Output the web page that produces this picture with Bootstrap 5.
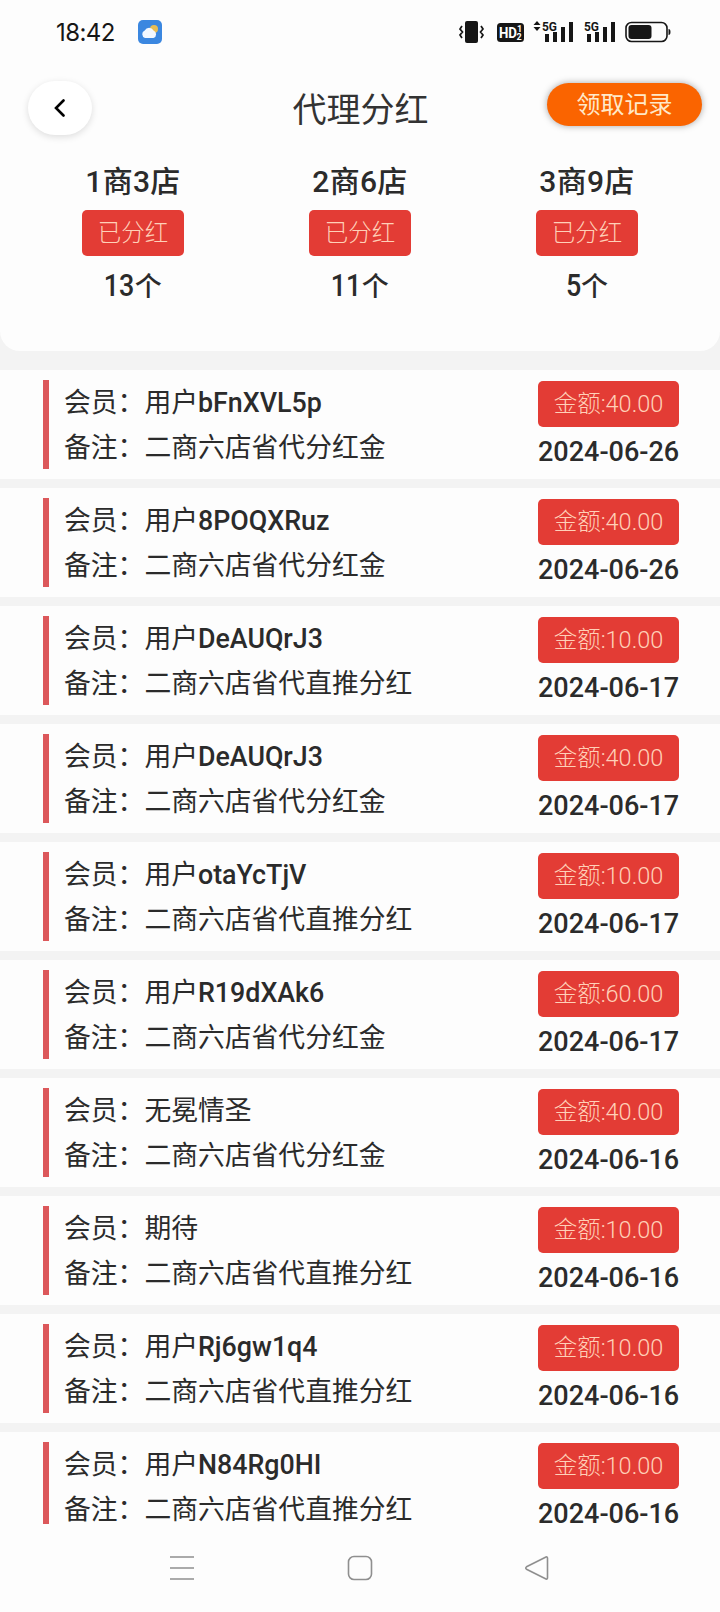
<!DOCTYPE html>
<html lang="zh-CN">
<head>
<meta charset="utf-8">
<meta name="viewport" content="width=device-width, initial-scale=1">
<title>代理分红</title>
<link href="https://cdn.jsdelivr.net/npm/bootstrap@5.3.0/dist/css/bootstrap.min.css" rel="stylesheet">
<style>
  body { width: 720px; height: 1612px; overflow: hidden; background: #fdfdfd; color: #2b2b2b;
    font-family: Roboto, "Noto Sans CJK SC", sans-serif; }
  svg { display: block; flex: none; }
  .status-bar { height: 64px; padding: 0 49px 0 56px; color: #161616; }
  .clock { font-family: Inter, "Noto Sans CJK SC", sans-serif; font-size: 24px; letter-spacing: -.6px; padding-top: 2px; }
  .weather { margin-left: 23px; }
  .title-bar { height: 90px; padding: 0 18px 0 28px; }
  .side { width: 155px; }
  .back-btn { width: 64px; height: 54px; border-radius: 27px; background: #fff; border: 0; margin-top: -2px;
    box-shadow: 0 2px 7px rgba(0,0,0,.13); }
  .page-title { font-size: 34px; font-weight: 400; line-height: 1; color: #333; padding: 2px 9px 0 0; }
  .record-btn { width: 155px; height: 43px; border-radius: 22px; background: #fa6400; color: #ffe9c9;
    font-size: 24px; line-height: 45px; padding: 0; border: 0; margin-top: -10px; box-shadow: 0 0 7px rgba(0,0,0,.35); }
  .panel { background: #f3f3f3; height: 216px; }
  .summary { height: 197px; background: #fdfdfd; border-radius: 0 0 20px 20px; padding: 2px 19.5px 0; }
  .shop { font-size: 30px; font-weight: 500; line-height: 51px; height: 54px; letter-spacing: .3px; }
  .paid, .amount { background: #e33c35; color: #ffd0b8; border-radius: 5px; font-weight: 300; height: 46px; line-height: 46px; }
  .paid { width: 102px; font-size: 23.5px; }
  .count { font-size: 27px; font-weight: 500; line-height: 58px; }
  .count b { font-size: 32px; font-weight: 500; display: inline-block; transform: scaleX(.84); transform-origin: right; }
  .count-2 { margin-left: -6px; }
  .count-1 { margin-left: -3px; }
  .records { background: #f3f3f3; gap: 9px; }
  .record { height: 109px; background: #fdfdfd; padding: 10px 41px 0 43px; }
  .record:last-child .info { height: 82px; }
  .info { height: 89px; border-left: 6px solid #dc585b; padding: 1px 0 0 15px; font-size: 26.8px; line-height: 44.5px; white-space: nowrap; }
  .latin { font-weight: 500; }
  .aside { width: 141px; padding-top: 1px; }
  .amount { font-size: 23.5px; }
  .date { font-size: 27px; font-weight: 500; line-height: 51px; white-space: nowrap; }
  .sys-nav { height: 71px; padding: 0 170px 17px 169px; color: #8f8f8f; }
</style>
</head>
<body class="d-flex flex-column">
<header class="status-bar d-flex align-items-center flex-shrink-0">
  <span class="clock">18:42</span>
  <svg class="weather" width="24" height="24" viewBox="0 0 24 24"><rect width="24" height="24" rx="5" fill="#3b87e0"/><circle cx="16" cy="9" r="4" fill="#e8bd55"/><path d="M7 18a4 4 0 0 1-.3-7.500A5 5 0 0 1 15.500 10.500 4 4 0 0 1 15.500 18z" fill="#f3f8ff"/></svg>
  <svg class="ms-auto" width="212" height="26" viewBox="0 0 212 26" fill="currentColor">
    <rect x="6" y="2" width="13" height="22" rx="2"/>
    <path d="M3 7l-2 3 2.500 3-2.500 3 2 3M22 7l2 3-2.500 3 2.500 3-2 3" fill="none" stroke="currentColor" stroke-width="1.700"/>
    <rect x="38" y="4" width="27" height="19" rx="3.500"/>
    <g font-family="Roboto, sans-serif" font-weight="700"><text x="40" y="18.500" font-size="14" fill="#fff" textLength="18" lengthAdjust="spacingAndGlyphs">HD</text><text x="58" y="13" font-size="9" fill="#fff">1</text><text x="57.500" y="21" font-size="9" fill="#fff">2</text>
    <text x="83" y="11.500" font-size="13" textLength="15" lengthAdjust="spacingAndGlyphs">5G</text><text x="125" y="11.500" font-size="13" textLength="15" lengthAdjust="spacingAndGlyphs">5G</text></g>
    <path d="M74.500 6L78 2l3.500 4zM74.500 8h7L78 12zM86 15h4v8h-4zM94 13h4v10h-4zM102 8h4v15h-4zM110 3h4v20h-4zM128 15h4v8h-4zM136 13h4v10h-4zM144 8h4v15h-4zM152 3h4v20h-4z"/>
    <rect x="167" y="3.500" width="41" height="19" rx="5.500" fill="none" stroke="currentColor" stroke-width="1.600"/>
    <rect x="169.500" y="6" width="23" height="14" rx="3"/><path d="M209.500 10q2 0 2 3t-2 3z"/>
  </svg>
</header>
<nav class="title-bar d-flex align-items-center justify-content-between flex-shrink-0">
  <div class="side"><button class="back-btn d-flex align-items-center justify-content-center" aria-label="返回">
    <svg width="12" height="18" viewBox="0 0 12 18"><path d="M9.500 1.500L2 9l7.500 7.500" fill="none" stroke="#000" stroke-width="2.600" stroke-linecap="round"/></svg></button></div>
  <h1 class="page-title m-0">代理分红</h1>
  <button class="btn record-btn">领取记录</button>
</nav>
<section class="panel flex-shrink-0">
  <div class="summary"><div class="row g-0 text-center">
    <div class="col d-flex flex-column align-items-center"><div class="shop">1商3店</div><div class="paid">已分红</div><div class="count count-2"><b>13</b>个</div></div>
    <div class="col d-flex flex-column align-items-center"><div class="shop">2商6店</div><div class="paid">已分红</div><div class="count count-2"><b>11</b>个</div></div>
    <div class="col d-flex flex-column align-items-center"><div class="shop">3商9店</div><div class="paid">已分红</div><div class="count count-1"><b>5</b>个</div></div>
  </div></div>
</section>
<main class="records d-flex flex-column flex-shrink-0" id="records"></main>
<footer class="sys-nav d-flex justify-content-between align-items-center flex-shrink-0">
  <svg width="26" height="26" viewBox="0 0 26 26" stroke="currentColor" stroke-width="1.600"><path d="M1 2h24M1 13h24M1 24h24"/></svg>
  <svg width="26" height="26" viewBox="0 0 26 26" fill="none" stroke="currentColor" stroke-width="1.600"><rect x="1.500" y="1.500" width="23" height="23" rx="5.500"/></svg>
  <svg width="26" height="26" viewBox="0 0 26 26" fill="none" stroke="currentColor" stroke-width="1.600" stroke-linejoin="round"><path d="M22 2L2.500 11.800q-1.500 1.200 0 2.400L22 24q1.500.5 1.500-1.200V3.200Q23.500 1.500 22 2z"/></svg>
</footer>
<script src="https://cdn.jsdelivr.net/npm/bootstrap@5.3.0/dist/js/bootstrap.bundle.min.js"></script>
<script>
  const share = '二商六店省代分红金', direct = '二商六店省代直推分红';
  const rows = [
    ['用户bFnXVL5p', share, '40.00', '2024-06-26'],
    ['用户8POQXRuz', share, '40.00', '2024-06-26'],
    ['用户DeAUQrJ3', direct, '10.00', '2024-06-17'],
    ['用户DeAUQrJ3', share, '40.00', '2024-06-17'],
    ['用户otaYcTjV', direct, '10.00', '2024-06-17'],
    ['用户R19dXAk6', share, '60.00', '2024-06-17'],
    ['无冕情圣', share, '40.00', '2024-06-16'],
    ['期待', direct, '10.00', '2024-06-16'],
    ['用户Rj6gw1q4', direct, '10.00', '2024-06-16'],
    ['用户N84Rg0HI', direct, '10.00', '2024-06-16']
  ];
  const accent = name => name.replace(/[A-Za-z0-9]+/, '<span class="latin">$&</span>');
  document.getElementById('records').innerHTML = rows.map(([name, note, sum, date]) => `
    <article class="record d-flex justify-content-between align-items-start">
      <div class="info"><div>会员：${accent(name)}</div><div>备注：${note}</div></div>
      <div class="aside text-center"><div class="amount">金额:${sum}</div><div class="date">${date}</div></div>
    </article>`).join('');
</script>
</body>
</html>
